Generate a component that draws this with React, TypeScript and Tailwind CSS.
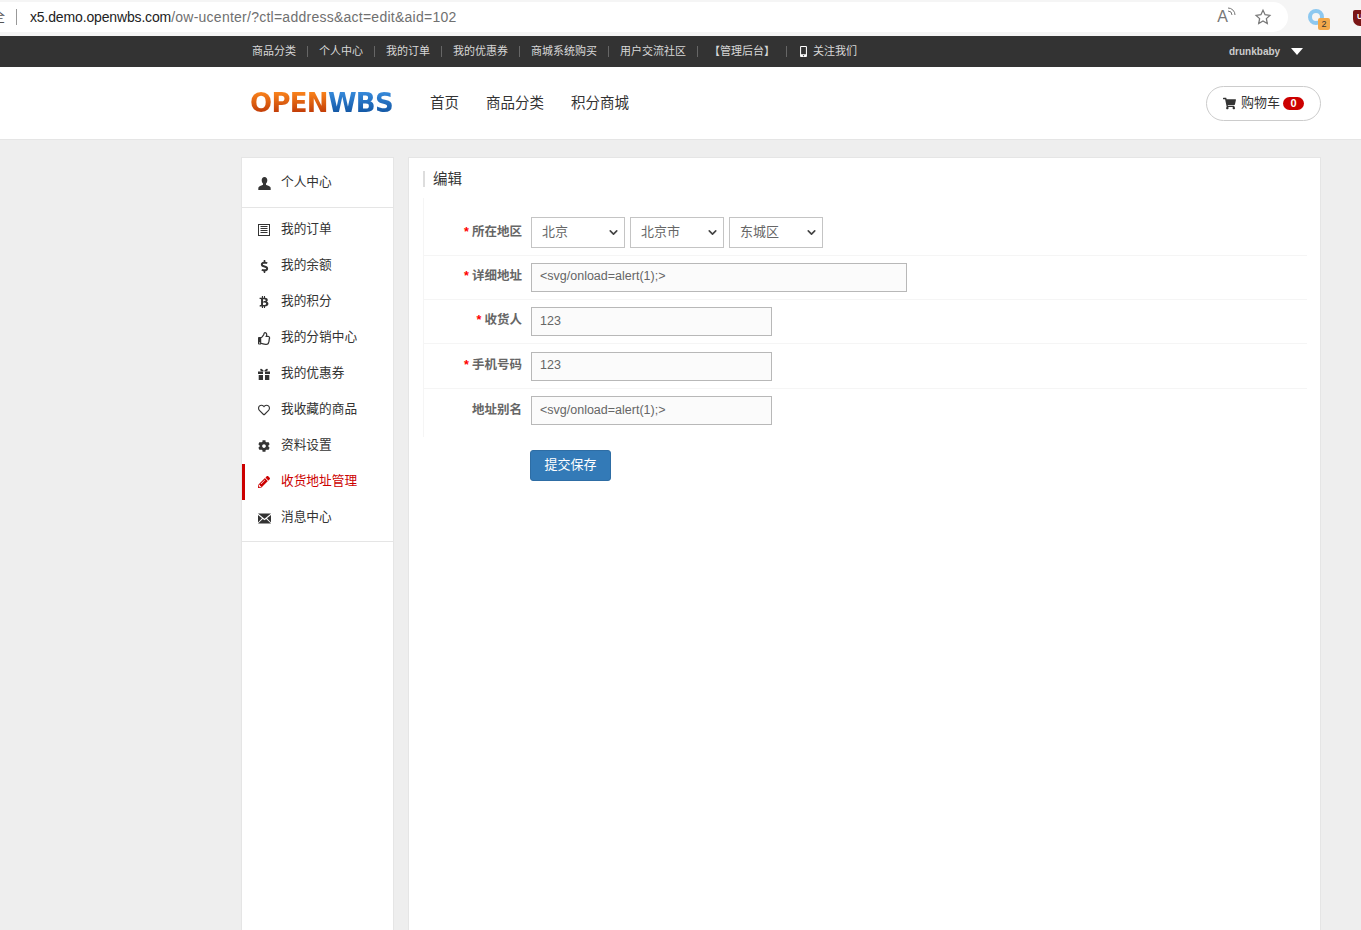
import React from 'react';
import { FaDollarSign, FaBtc, FaRegThumbsUp, FaRegHeart, FaCog, FaPencilAlt, FaShoppingCart, FaMobileAlt } from 'react-icons/fa';
import { ChevronDown } from 'lucide-react';

const FONT = "font-['Liberation_Sans','Noto_Sans_CJK_SC',sans-serif]";

const ListIcon = () => (
  <svg width="12" height="12" viewBox="0 0 12 12" fill="none" stroke="#333">
    <rect x="0.5" y="0.5" width="11" height="11" />
    <path d="M2.5 2.500h7M2.5 4.500h7M2.5 6.500h7M2.5 8.500h7" />
  </svg>
);

const UserIcon = () => (
  <svg width="13" height="13" viewBox="0 0 13 13" fill="#333">
    <path d="M6.500 0C8.300 0 9.300 1.300 9.300 3.200c0 1.400-.6 2.700-1.300 3.400v1.200c.8.500 4 1.300 4.500 2.500.2.700.2 1.700.2 2.700H.3c0-1 0-2 .2-2.700C1 9.100 4.200 8.300 5 7.800V6.600C4.300 5.900 3.700 4.600 3.700 3.200 3.700 1.300 4.700 0 6.500 0z" />
  </svg>
);

const GiftIcon = () => (
  <svg width="12" height="12" viewBox="0 0 12 12" fill="#333">
    <path d="M0 3.500h5v2.500H0zM7 3.500h5v2.500H7zM.7 7h4.300v5H.7zM7 7h4.300v5H7z" />
    <path d="M6 3.200C4.800 1.600 3.700.6 2.800.8 1.800 1 2 2.700 3.200 3.200zM6 3.200C7.200 1.600 8.300.6 9.200.8c1 .2.800 1.900-.4 2.400z" />
  </svg>
);

const MailIcon = () => (
  <svg width="13" height="11" viewBox="0 0 13 11" fill="#333">
    <path d="M0 .5h13L6.500 5.800zM0 2v7.500l4-4.200zM13 2v7.500L9 5.300zM0 10.500h13L8.200 6 6.500 7.300 4.800 6z" />
  </svg>
);

const topLinks = ['商品分类', '个人中心', '我的订单', '我的优惠券', '商城系统购买', '用户交流社区', '【管理后台】'];

const menu = [
  { label: '我的订单', icon: <ListIcon /> },
  { label: '我的余额', icon: <FaDollarSign size={13} /> },
  { label: '我的积分', icon: <FaBtc size={12} /> },
  { label: '我的分销中心', icon: <FaRegThumbsUp size={13} /> },
  { label: '我的优惠券', icon: <GiftIcon /> },
  { label: '我收藏的商品', icon: <FaRegHeart size={12} /> },
  { label: '资料设置', icon: <FaCog size={12} /> },
  { label: '收货地址管理', icon: <FaPencilAlt size={12} />, active: true },
  { label: '消息中心', icon: <MailIcon /> },
];

const Row = ({ label, required, children, last }: { label: string; required?: boolean; children: React.ReactNode; last?: boolean }) => (
  <div className={`flex items-center h-[44.4px] ${last ? '' : 'border-b border-[#f5f5f5]'}`}>
    <label className="w-[98px] pb-[2px] text-right text-[12.500px] font-bold text-[#666] shrink-0">
      {required && <span className="text-[#f00] mr-[3px]">*</span>}
      {label}
    </label>
    <div className="ml-[9px] flex gap-[5px]">{children}</div>
  </div>
);

const Sel = ({ value, w }: { value: string; w: string }) => (
  <div className={`${w} h-[31px] border border-[#c4c4c4] bg-white flex items-center justify-between pl-[10px] pr-[4px] pb-[2px] text-[13px] text-[#666]`}>
    <span>{value}</span>
    <ChevronDown size={13} strokeWidth={3} className="text-[#444] mt-[2px]" />
  </div>
);

const Field = ({ value, w }: { value: string; w: string }) => (
  <input
    readOnly
    value={value}
    className={`${w} h-[29px] border border-[#b8b8b8] bg-[#fbfbfb] px-[8px] pb-[2px] text-[12.500px] text-[#666] outline-none ${FONT}`}
  />
);

export default function App() {
  return (
    <div className={`h-[930px] overflow-hidden bg-[#eeeeee] ${FONT}`}>
      {/* browser chrome */}
      <div className="h-[36px] bg-[#f5f5f5] flex items-start pt-[2px] overflow-hidden">
        <div className="w-[1288px] h-[30px] bg-white rounded-r-full flex items-center shrink-0">
          <span className="w-[5px] flex justify-end overflow-hidden text-[13px] text-[#555] whitespace-nowrap">
            <span className="shrink-0">全</span>
          </span>
          <span className="ml-[11px] w-px h-[16px] bg-[#999]" />
          <span className="ml-[13px] text-[14px] text-[#222] tracking-[-0.15px]">
            x5.demo.openwbs.com<span className="text-[#707070] tracking-[0.25px]">/ow-ucenter/?ctl=address&amp;act=edit&amp;aid=102</span>
          </span>
          <div className="ml-auto mr-[16px] flex items-center gap-[22px] text-[#777]">
            <span className="relative text-[16px] leading-none pr-[4px]">
              A
              <svg className="absolute -top-[2px] right-[-4px]" width="9" height="9" viewBox="0 0 9 9" fill="none" stroke="#777">
                <path d="M1 1a7 7 0 0 1 7 7M1 4a4 4 0 0 1 4 4" />
              </svg>
            </span>
            <svg width="18" height="18" viewBox="0 0 24 24" fill="none" stroke="#777" strokeWidth="1.700">
              <path d="M12 3l2.800 6 6.400.8-4.700 4.400 1.200 6.400L12 17.400l-5.700 3.200 1.200-6.400L2.800 9.800l6.400-.8z" />
            </svg>
          </div>
        </div>
        <div className="relative ml-[20px] mt-[7px] w-[16px] h-[16px] rounded-full border-[4px] border-[#8cc8f0] shrink-0">
          <span className="absolute left-[6px] top-[5px] w-[12px] h-[12px] rounded-[2px] bg-[#f2a94b] text-[9px] leading-[12px] text-center text-[#333]">2</span>
        </div>
        <div className="relative ml-[29px] mt-[8px] w-[14px] h-[16px] shrink-0 bg-[#7a1616] rounded-b-[7px] rounded-t-[2px] text-[8px] font-bold leading-[14px] text-center text-white">
          U
        </div>
      </div>

      {/* top nav */}
      <div className="h-[31px] bg-[#333333] relative flex items-center pl-[252px] text-[11px] text-[#d8d8d8]">
        {topLinks.map(t => (
          <React.Fragment key={t}>
            <span>{t}</span>
            <span className="mx-[11px] w-px h-[11px] bg-[#666]" />
          </React.Fragment>
        ))}
        <FaMobileAlt size={11} className="text-white mr-[4px]" />
        <span>关注我们</span>
        <div className="absolute left-[1229px] top-0 h-full flex items-center font-bold text-[10px] text-[#ccc]">
          drunkbaby
          <span className="ml-[11px] w-0 h-0 border-x-[6.500px] border-x-transparent border-t-[7px] border-t-white" />
        </div>
      </div>

      {/* header */}
      <div className="h-[73px] bg-white border-b border-[#e5e5e5] flex items-center pl-[250px]">
        <div className="w-[144px] h-[24px] flex items-center font-['DejaVu_Sans',sans-serif] font-bold text-[26px] leading-none tracking-[-0.7px]">
          <span className="bg-gradient-to-b from-[#ff8a1e] to-[#b82d04] bg-clip-text text-transparent">OPEN</span>
          <span className="bg-gradient-to-b from-[#3a8fe0] to-[#0c4f9c] bg-clip-text text-transparent">WBS</span>
        </div>
        <nav className="ml-[36px] pt-[2px] flex gap-[27px] text-[14.500px] text-[#333]">
          <span>首页</span>
          <span>商品分类</span>
          <span>积分商城</span>
        </nav>
        <div className="ml-[577px] w-[115px] h-[35px] rounded-full border border-[#ccc] flex items-center pl-[16px] text-[13px] text-[#333]">
          <FaShoppingCart size={13} className="mr-[5px]" />
          购物车
          <span className="ml-[3px] w-[21px] h-[13px] rounded-full bg-[#cc0000] text-white text-[11px] font-bold leading-[13px] text-center">0</span>
        </div>
      </div>

      {/* body */}
      <div className="flex items-start pt-[17px] pl-[241px] gap-[14px]">
        <aside className="w-[153px] h-[800px] bg-white border border-[#e5e5e5]">
          <div className="h-[50px] border-b border-[#e5e5e5] flex items-center pl-[16px] pt-[1px] text-[12.700px] text-[#333]">
            <span className="w-[23px] flex"><UserIcon /></span>
            个人中心
          </div>
          <ul className="pt-[4px] pb-[5px] border-b border-[#e5e5e5]">
            {menu.map(m => (
              <li
                key={m.label}
                className={`h-[36px] flex items-center text-[12.700px] ${m.active ? 'text-[#cc0000] border-l-[3px] border-[#cc0000] pl-[13px]' : 'text-[#333] pl-[16px]'}`}
              >
                <span className="w-[23px] flex">{m.icon}</span>
                {m.label}
              </li>
            ))}
          </ul>
        </aside>

        <main className="w-[913px] h-[800px] bg-white border border-[#e5e5e5] pl-[14px] pr-[13px] pt-[13px]">
          <h2 className="h-[16px] border-l-[2px] border-[#ddd] pl-[8px] text-[14.500px] font-normal leading-[16px] text-[#333]">编辑</h2>
          <div className="mt-[11px] pt-[13.200px] pb-[4px] border-l border-[#f5f5f5]">
            <Row label="所在地区" required>
              <Sel value="北京" w="w-[94px]" />
              <Sel value="北京市" w="w-[94px]" />
              <Sel value="东城区" w="w-[94px]" />
            </Row>
            <Row label="详细地址" required>
              <Field value="<svg/onload=alert(1);>" w="w-[376px]" />
            </Row>
            <Row label="收货人" required>
              <Field value="123" w="w-[241px]" />
            </Row>
            <Row label="手机号码" required>
              <Field value="123" w="w-[241px]" />
            </Row>
            <Row label="地址别名" last>
              <Field value="<svg/onload=alert(1);>" w="w-[241px]" />
            </Row>
          </div>
          <button className="mt-[13px] ml-[107px] w-[81px] h-[31px] rounded-[3px] bg-[#337ab7] border border-[#2e6da4] pb-[2px] text-white text-[13px]">
            提交保存
          </button>
        </main>
      </div>
    </div>
  );
}
